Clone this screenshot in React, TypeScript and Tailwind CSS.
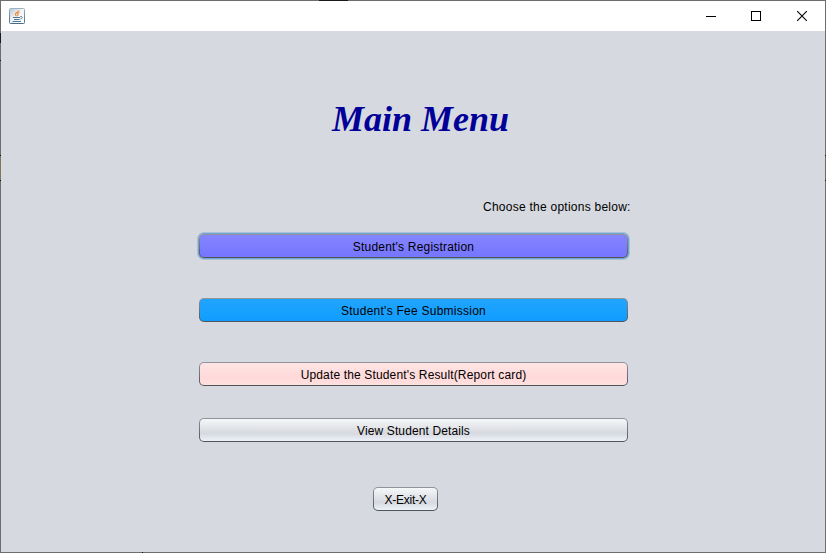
import type { ReactNode } from "react";

const FONT = "font-['Liberation_Sans',Arial,sans-serif]";

type ButtonProps = {
  children: ReactNode;
  frame: string;
  fill: string;
  text: string;
};

function NimbusButton({ children, frame, fill, text }: ButtonProps) {
  return (
    <button className={`block h-6 rounded-[5px] bg-linear-to-b from-[#92959b] to-[#505359] p-px ${frame}`}>
      <span className={`flex h-full items-center justify-center rounded-[4px] pt-[2px] ${fill}`}>
        <span className={`whitespace-nowrap text-[12px] leading-[14px] text-black ${text}`}>{children}</span>
      </span>
    </button>
  );
}

function JavaIcon() {
  return (
    <svg width="16" height="16" viewBox="0 0 16 16" className="ml-2">
      <defs>
        <linearGradient id="tile" x1="0" y1="0" x2="1" y2="1">
          <stop offset="0" stopColor="#b4c6d3" />
          <stop offset="0.45" stopColor="#f1f3f4" />
          <stop offset="1" stopColor="#ffffff" />
        </linearGradient>
        <linearGradient id="edge" x1="0" y1="0" x2="0" y2="1">
          <stop offset="0" stopColor="#9cb3c4" />
          <stop offset="1" stopColor="#4a6b84" />
        </linearGradient>
      </defs>
      <rect x="0.5" y="0.5" width="15" height="15" rx="1" fill="url(#tile)" stroke="url(#edge)" />
      <path d="M10 2.3C9.8 4 6.3 4.6 6.4 6.4C6.5 7.2 7.2 7.6 7.5 8.2M10.6 4.5C8.8 5 8.2 5.9 8.9 6.7C9.2 7.1 8.9 7.6 8.6 8.1" fill="none" stroke="#e8842c" strokeWidth="1.1" />
      <path d="M4 9.5H11M5 11.5H10.5M3.5 13.5H12M11.3 8.5H12.5C13.8 9.3 13.2 10.6 11.3 11" fill="none" stroke="#4b7896" strokeWidth="1" />
    </svg>
  );
}

function TitleBar() {
  return (
    <header className="flex h-[30px] items-center justify-between bg-white pb-px">
      <JavaIcon />
      <div className="flex">
        <svg width="45" height="28" viewBox="0 0 45 28" shapeRendering="crispEdges">
          <path d="M18 14.5H28" stroke="#000" />
        </svg>
        <svg width="46" height="28" viewBox="0 0 46 28" shapeRendering="crispEdges">
          <rect x="18.5" y="9.5" width="9" height="9" fill="none" stroke="#000" />
        </svg>
        <svg width="46" height="28" viewBox="0 0 46 28">
          <path d="M18.2 9.2L27.8 18.8M27.8 9.2L18.2 18.8" stroke="#000" strokeWidth="1.1" />
        </svg>
      </div>
    </header>
  );
}

/* Slivers of the desktop showing through the translucent window frame. */
function FrameSlivers() {
  return (
    <>
      <i className="absolute top-0 left-[319px] h-px w-[29px] bg-[#1b181b]" />
      <i className="absolute top-[33px] left-0 h-[10px] w-px bg-[#1b181b]" />
      <i className="absolute top-[60px] left-0 h-px w-px bg-[#1b181b]" />
      <i className="absolute top-[155px] left-0 h-[26px] w-px border-y border-[#111111] bg-[#80765f]" />
      <i className="absolute top-[155px] right-0 h-[26px] w-px border-y border-[#111111] bg-[#6b6a65]" />
      <i className="absolute bottom-0 left-[142px] h-px w-px bg-[#111111]" />
    </>
  );
}

export default function App() {
  return (
    <div className={`relative h-[553px] w-[826px] overflow-hidden bg-[#6d6d70] p-px ${FONT}`}>
      <div className="h-full bg-[#d6d9df]">
        <TitleBar />
        <main className="flex flex-col">
          <h1 className="mt-[67px] ml-[331px] h-[42px] whitespace-nowrap font-['Liberation_Serif','Times_New_Roman',serif] text-[36px] leading-[42px] font-bold italic text-[#000099]">
            Main Menu
          </h1>
          <p className="mt-[60px] ml-[482px] h-[14px] whitespace-nowrap text-[12px] leading-[14px] tracking-[0.25px] text-black">
            Choose the options below:
          </p>
          <div className="mt-[20px] ml-[198px] flex w-[429px] flex-col">
            <div className="rounded-[5px] shadow-[0_0_0_1px_#73a4d1,0_0_0_2px_#a9c2da]">
              <NimbusButton frame="w-full" fill="bg-linear-to-b from-[#8585ff] to-[#7575ff]" text="tracking-[0.2px]">
                Student's Registration
              </NimbusButton>
            </div>
            <div className="mt-10">
              <NimbusButton frame="w-full" fill="bg-linear-to-b from-[#20a5ff] to-[#109dff]" text="tracking-[0.25px]">
                Student's Fee Submission
              </NimbusButton>
            </div>
            <div className="mt-10">
              <NimbusButton frame="w-full" fill="bg-linear-to-b from-[#ffe5e5] via-[#ffd9d9] via-60% to-[#ffdfdf]" text="tracking-[0.15px]">
                Update the Student's Result(Report card)
              </NimbusButton>
            </div>
            <div className="mt-8">
              <NimbusButton frame="w-full" fill="bg-linear-to-b from-[#f6f7f9] via-[#d6d9df] via-65% to-[#edf1fa]" text="tracking-[0.12px]">
                View Student Details
              </NimbusButton>
            </div>
          </div>
          <div className="mt-[45px] ml-[372px]">
            <NimbusButton frame="w-[65px]" fill="bg-linear-to-b from-[#f6f7f9] via-[#d6d9df] via-65% to-[#edf1fa]" text="tracking-[-0.25px]">
              X-Exit-X
            </NimbusButton>
          </div>
        </main>
      </div>
      <FrameSlivers />
    </div>
  );
}
